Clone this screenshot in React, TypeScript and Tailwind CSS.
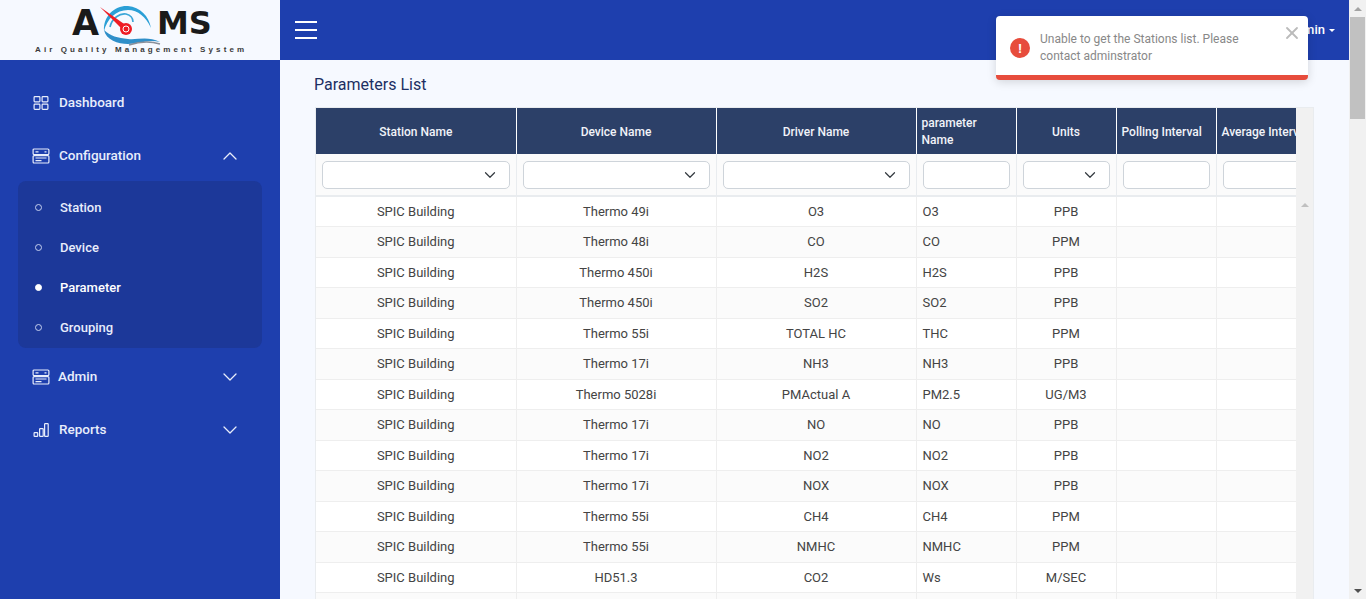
import { ChevronDown, ChevronUp, X } from 'lucide-react'

const ROWS = [
  ['Thermo 49i', 'O3', 'O3', 'PPB'],
  ['Thermo 48i', 'CO', 'CO', 'PPM'],
  ['Thermo 450i', 'H2S', 'H2S', 'PPB'],
  ['Thermo 450i', 'SO2', 'SO2', 'PPB'],
  ['Thermo 55i', 'TOTAL HC', 'THC', 'PPM'],
  ['Thermo 17i', 'NH3', 'NH3', 'PPB'],
  ['Thermo 5028i', 'PMActual A', 'PM2.5', 'UG/M3'],
  ['Thermo 17i', 'NO', 'NO', 'PPB'],
  ['Thermo 17i', 'NO2', 'NO2', 'PPB'],
  ['Thermo 17i', 'NOX', 'NOX', 'PPB'],
  ['Thermo 55i', 'CH4', 'CH4', 'PPM'],
  ['Thermo 55i', 'NMHC', 'NMHC', 'PPM'],
  ['HD51.3', 'CO2', 'Ws', 'M/SEC'],
  ['HD51.3', 'WS', 'Ws', 'M/SEC'],
]

const SUB = [
  { label: 'Station' },
  { label: 'Device' },
  { label: 'Parameter', active: true },
  { label: 'Grouping' },
]

const GridIcon = () => (
  <svg width="18" height="16" viewBox="0 0 18 16" fill="none" stroke="currentColor" strokeWidth="1.2">
    <rect x="2.1" y="1.6" width="5.8" height="5.2" rx="0.8" />
    <rect x="10.1" y="1.6" width="5.8" height="5.2" rx="0.8" />
    <rect x="2.1" y="9.2" width="5.8" height="5.2" rx="0.8" />
    <rect x="10.1" y="9.2" width="5.8" height="5.2" rx="0.8" />
  </svg>
)

const ServerIcon = () => (
  <svg width="18" height="16" viewBox="0 0 18 16" fill="none" stroke="currentColor" strokeWidth="1.2">
    <rect x="1.1" y="1" width="15.8" height="5.6" rx="1" />
    <rect x="1.1" y="7.6" width="15.8" height="7.4" rx="1" />
    <path d="M3.5 3.8h3M12.5 3.8h2M3.5 10h11M3.5 12.6h6" />
  </svg>
)

const BarsIcon = () => (
  <svg width="18" height="16" viewBox="0 0 18 16" fill="none" stroke="currentColor" strokeWidth="1.2">
    <rect x="2.1" y="10.6" width="3.6" height="3.8" rx="0.6" />
    <rect x="7.6" y="6.6" width="3.6" height="7.8" rx="0.6" />
    <rect x="12.6" y="1.6" width="3.6" height="12.8" rx="0.6" />
  </svg>
)

/* inline logo: letters stay text, the gauge swirl is a drawing */
const Logo = () => (
  <div className="relative flex h-[60px] w-[280px] flex-col bg-[#f6f9ff]">
    <div className="flex h-[45px] items-center pt-[1px] pl-[72px] font-['DejaVu_Sans'] text-[32px] leading-none font-bold text-[#1a1a1a]">
      <span className="w-[85px] text-[35px]">A</span>
      <span>MS</span>
    </div>
    <svg width="70" height="50" viewBox="0 0 70 50" fill="none" className="absolute top-0 left-[96px]">
      <path d="M8 31C7 15 20 5 32 6C44 7 53 16 55 28C50 17 42 10 32 10C20 10 11 19 8 31Z" fill="#2a9fd6" />
      <path d="M14 27C16 18 24 13 30 14C34 15 37 18 37 22" stroke="#3aa6d8" strokeWidth="1.6" />
      <path d="M8 30C10 40 22 44 32 44C44 44 52 39 64 42C52 36 42 40 32 39C22 38 14 36 8 30Z" fill="#2f8fc9" />
      <path d="M33 45C42 42 54 41 64 44" stroke="#8a8f99" strokeWidth="1.4" />
      <path d="M4 7L28 31L31 26Z" fill="#ee1c25" />
      <circle cx="30" cy="29" r="6" fill="#ee1c25" />
      <circle cx="30" cy="29" r="3" stroke="#fff" strokeWidth="1" />
    </svg>
    <div className="pl-[35px] font-['Liberation_Sans'] text-[8px] leading-[10px] font-bold tracking-[3.1px] whitespace-nowrap text-[#3a3a3a]">
      Air Quality Management System
    </div>
  </div>
)

const Sidebar = () => (
  <aside className="flex w-[280px] shrink-0 flex-col bg-[#1e3fae] font-['Roboto'] text-[13.5px] font-medium text-[#e8edfb]">
    <Logo />
    <nav className="flex flex-col pt-[16px]">
      <div className="flex h-[53px] items-center pl-[32px]">
        <GridIcon />
        <span className="ml-[9px]">Dashboard</span>
      </div>
      <div className="flex h-[53px] items-center pr-[38px] pl-[32px]">
        <ServerIcon />
        <span className="ml-[9px]">Configuration</span>
        <ChevronUp size={24} strokeWidth={1.3} className="ml-auto" />
      </div>
      <div className="mx-[18px] -mt-px flex h-[167px] flex-col rounded-lg bg-[#1c3899] pt-[6.5px] text-[13px]">
        {SUB.map((s) => (
          <div key={s.label} className="flex h-[40.5px] items-center pl-[17px]">
            <span className={`-mt-px h-[7px] w-[7px] rounded-full border ${s.active ? 'border-white bg-white' : 'border-[#c5cfee]'}`} />
            <span className={`ml-[18px] ${s.active ? 'text-white' : ''}`}>{s.label}</span>
          </div>
        ))}
      </div>
      <div className="flex h-[57px] items-center pr-[38px] pl-[32px]">
        <ServerIcon />
        <span className="ml-[8px]">Admin</span>
        <ChevronDown size={24} strokeWidth={1.3} className="ml-auto" />
      </div>
      <div className="flex h-[49px] items-center pr-[38px] pl-[32px]">
        <BarsIcon />
        <span className="ml-[9px]">Reports</span>
        <ChevronDown size={24} strokeWidth={1.3} className="ml-auto" />
      </div>
    </nav>
  </aside>
)

const SelectBox = () => (
  <div className="flex h-[28px] items-center justify-end rounded-[5px] border border-[#ced4da] bg-white pr-[10px] text-[#343a40]">
    <ChevronDown size={18} strokeWidth={1.6} />
  </div>
)
const InputBox = () => <div className="h-[28px] rounded-[5px] border border-[#ced4da] bg-white" />

const Th = ({ children, left, wrap }: { children: React.ReactNode; left?: boolean; wrap?: boolean }) => (
  <th className={`border-r border-white bg-[#2c4068] px-[5px] pt-[2px] text-[12px] leading-[17px] font-medium text-[#f1f3f8] ${left ? 'text-left' : 'text-center'} ${wrap ? '' : 'whitespace-nowrap'}`}>
    {children}
  </th>
)

const ParamTable = () => (
  <div className="flex h-[492px] border-t border-r border-l border-[#e9ecef]">
    <div className="w-[981px] overflow-hidden">
      <table className="w-[1099px] table-fixed border-collapse font-['Roboto'] text-[13px] text-[#444]">
        <colgroup>
          <col className="w-[200px]" />
          <col className="w-[200px]" />
          <col className="w-[200px]" />
          <col className="w-[100px]" />
          <col className="w-[100px]" />
          <col className="w-[100px]" />
          <col className="w-[199px]" />
        </colgroup>
        <thead>
          <tr className="h-[46px]">
            <Th>Station Name</Th>
            <Th>Device Name</Th>
            <Th>Driver Name</Th>
            <Th left wrap>parameter Name</Th>
            <Th>Units</Th>
            <Th left>Polling Interval</Th>
            <th className="bg-[#2c4068] px-[5px] pt-[2px] text-left text-[12px] font-medium whitespace-nowrap text-[#f1f3f8]">Average Interval</th>
          </tr>
          <tr className="h-[42px] border-b-2 border-[#e9ecef] bg-[#fbfbfb]">
            <td className="border-r border-[#e9ecef] px-[6px]"><SelectBox /></td>
            <td className="border-r border-[#e9ecef] px-[6px]"><SelectBox /></td>
            <td className="border-r border-[#e9ecef] px-[6px]"><SelectBox /></td>
            <td className="border-r border-[#e9ecef] px-[6px]"><InputBox /></td>
            <td className="border-r border-[#e9ecef] px-[6px]"><SelectBox /></td>
            <td className="border-r border-[#e9ecef] px-[6px]"><InputBox /></td>
            <td className="pl-[6px]"><InputBox /></td>
          </tr>
        </thead>
        <tbody>
          {ROWS.map((r, i) => (
            <tr key={i} className={`h-[30.5px] border-b border-[#eeeeee] ${i % 2 ? 'bg-[#fbfbfb]' : 'bg-white'}`}>
              <td className="border-r border-[#eeeeee] p-0 text-center">SPIC Building</td>
              <td className="border-r border-[#eeeeee] p-0 text-center">{r[0]}</td>
              <td className="border-r border-[#eeeeee] p-0 text-center">{r[1]}</td>
              <td className="border-r border-[#eeeeee] py-0 pl-[6px]">{r[2]}</td>
              <td className="border-r border-[#eeeeee] p-0 text-center">{r[3]}</td>
              <td className="border-r border-[#eeeeee] p-0" />
              <td className="p-0" />
            </tr>
          ))}
        </tbody>
      </table>
    </div>
    <div className="flex w-[17px] flex-col items-center bg-[#f1f1f1] pt-[95px]">
      <span className="h-0 w-0 border-r-[4px] border-b-[4px] border-l-[4px] border-r-transparent border-b-[#c0c0c0] border-l-transparent" />
    </div>
  </div>
)

const Toast = () => (
  <div className="absolute top-[16px] left-[996px] flex h-[64px] w-[312px] rounded-[4px] border-b-[5px] border-[#e74c3c] bg-white font-['Roboto'] text-[12px] leading-[17px] text-[#888] shadow-[0_2px_10px_rgba(0,0,0,0.15)]">
    <div className="mt-[22px] ml-[14px] flex h-[20px] w-[20px] shrink-0 items-center justify-center rounded-full bg-[#e74c3c] text-[13px] font-bold text-white">!</div>
    <div className="mt-[15px] ml-[10px] w-[226px]">Unable to get the Stations list. Please contact adminstrator</div>
    <X size={20} strokeWidth={2.2} className="mt-[7px] ml-[16px] text-[#bbb]" />
  </div>
)

export default function App() {
  return (
    <div className="relative flex h-[599px] w-[1366px] overflow-hidden bg-[#f6f9ff]">
      <Sidebar />
      <div className="flex min-w-0 flex-1 flex-col">
        <header className="flex h-[60px] shrink-0 items-center justify-between bg-[#1e3fae] pr-[14px] pl-[15px] font-['Roboto'] text-[13px] font-medium text-white">
          <div className="flex flex-col gap-[6px]">
            <span className="h-[2px] w-[22px] bg-white" />
            <span className="h-[2px] w-[22px] bg-white" />
            <span className="h-[2px] w-[22px] bg-white" />
          </div>
          <div className="flex items-center gap-[4px]">
            <span>Admin</span>
            <span className="h-0 w-0 border-t-[3px] border-r-[3px] border-l-[3px] border-t-white border-r-transparent border-l-transparent" />
          </div>
        </header>
        <main className="flex flex-1 flex-col pt-[14px] pr-[35px] pl-[35px]">
          <h1 className="mb-[12px] -ml-px font-['Roboto'] text-[16px] leading-[21px] text-[#1c2f63]">Parameters List</h1>
          <ParamTable />
        </main>
      </div>
      {/* page scrollbar */}
      <div className="flex w-[17px] shrink-0 flex-col items-center bg-[#f1f1f1]">
        <div className="flex h-[17px] items-center">
          <span className="h-0 w-0 border-r-[4px] border-b-[4px] border-l-[4px] border-r-transparent border-b-[#a3a3a3] border-l-transparent" />
        </div>
        <div className="h-[102px] w-[15px] bg-[#c1c1c1]" />
        <div className="mt-auto flex h-[17px] items-center">
          <span className="h-0 w-0 border-t-[4px] border-r-[4px] border-l-[4px] border-t-[#505050] border-r-transparent border-l-transparent" />
        </div>
      </div>
      <Toast />
    </div>
  )
}
